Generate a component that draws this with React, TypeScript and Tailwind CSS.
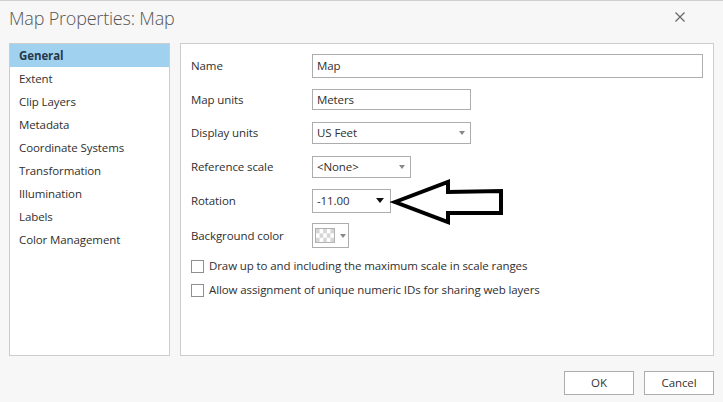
import React from "react";

const font = { fontFamily: '"Open Sans", "Noto Sans", sans-serif' };

function Caret({ dark }: { dark?: boolean }) {
  return dark ? (
    <svg width="8" height="5" viewBox="0 0 8 5" className="shrink-0">
      <path d="M0 0 L8 0 L4 5 Z" fill="#111" />
    </svg>
  ) : (
    <svg width="6" height="4" viewBox="0 0 6 4" className="shrink-0">
      <path d="M0 0 L6 0 L3 4 Z" fill="#888" />
    </svg>
  );
}

function Row({ h, label, children }: { h: string; label: string; children: React.ReactNode }) {
  return (
    <div className={`flex items-center ${h}`}>
      <div className="w-[121px] shrink-0">{label}</div>
      {children}
    </div>
  );
}

export default function App() {
  const items = [
    "General",
    "Extent",
    "Clip Layers",
    "Metadata",
    "Coordinate Systems",
    "Transformation",
    "Illumination",
    "Labels",
    "Color Management",
  ];
  return (
    <div
      className="relative w-[723px] h-[402px] bg-[#f7f7f7] border-t border-[#cfcfcf] text-[11.5px] tracking-[-0.1px] text-[#2f2f2f] flex flex-col overflow-hidden"
      style={font}
    >
      <div className="h-[42px] flex items-start justify-between pl-[9px] pr-[38px]">
        <div className="text-[18px] font-light text-[#555] leading-none mt-[8px] tracking-[-0.2px]">
          Map Properties: Map
        </div>
        <svg width="10" height="10" viewBox="0 0 10 10" className="mt-[11px]">
          <path d="M0.5 0.5 L9.5 9.5 M9.5 0.5 L0.5 9.5" stroke="#666" strokeWidth="1.2" />
        </svg>
      </div>
      <div className="flex gap-[10px] px-[9px] h-[313px]">
        <div className="w-[161px] bg-white border border-[#cdcdcd] flex flex-col">
          {items.map((it, i) => (
            <div
              key={it}
              className={`h-[23px] flex items-center pl-[9px] ${
                i === 0 ? "bg-[#a0d2f0] font-bold text-[#263848]" : ""
              }`}
            >
              {it}
            </div>
          ))}
        </div>
        <div className="flex-1 bg-white border border-[#cdcdcd] pl-[10px] pr-[10px] pt-[5px] flex flex-col">
          <Row h="h-[34px]" label="Name">
            <div className="flex-1 h-[24px] border border-[#adadad] flex items-center pl-[4px]">Map</div>
          </Row>
          <Row h="h-[33px]" label="Map units">
            <div className="w-[159px] h-[21px] border border-[#adadad] flex items-center pl-[4px]">Meters</div>
          </Row>
          <Row h="h-[34px]" label="Display units">
            <div className="w-[159px] h-[22px] border border-[#adadad] flex items-center justify-between pl-[4px] pr-[5px]">
              <span>US Feet</span>
              <Caret />
            </div>
          </Row>
          <Row h="h-[33px]" label="Reference scale">
            <div className="w-[99px] h-[22px] border border-[#adadad] flex items-center justify-between pl-[4px] pr-[5px]">
              <span>&lt;None&gt;</span>
              <Caret />
            </div>
          </Row>
          <Row h="h-[35px]" label="Rotation">
            <div className="w-[79px] h-[24px] border border-[#adadad] flex items-center justify-between pl-[4px] pr-[6px]">
              <span>-11.00</span>
              <Caret dark />
            </div>
          </Row>
          <Row h="h-[35px]" label="Background color">
            <div className="w-[37px] h-[25px] border border-[#adadad] flex items-center pl-[2px] gap-[5px]">
              <svg width="20" height="15" viewBox="0 0 20 15">
                <rect x="0.5" y="0.5" width="19" height="14" fill="#fff" stroke="#b0b0b0" />
                {[0, 1, 2, 3, 4].map((c) =>
                  [0, 1, 2].map((r) =>
                    (c + r) % 2 === 0 ? (
                      <rect key={`${c}-${r}`} x={1 + c * 3.6} y={1 + r * 4.4} width="3.6" height="4.4" fill="#d6d6d6" />
                    ) : null
                  )
                )}
              </svg>
              <Caret />
            </div>
          </Row>
          <div className="h-[24px] mt-[1px] flex items-center gap-[5px]">
            <div className="w-[13px] h-[13px] border border-[#8f8f8f] bg-white" />
            <span>Draw up to and including the maximum scale in scale ranges</span>
          </div>
          <div className="h-[24px] flex items-center gap-[5px]">
            <div className="w-[13px] h-[13px] border border-[#8f8f8f] bg-white" />
            <span>Allow assignment of unique numeric IDs for sharing web layers</span>
          </div>
        </div>
      </div>
      <div className="flex justify-end gap-[10px] pr-[9px] mt-[15px]">
        <button className="w-[70px] h-[24px] border border-[#adadad] bg-white text-[#333]">OK</button>
        <button className="w-[70px] h-[24px] border border-[#adadad] bg-white text-[#333]">Cancel</button>
      </div>
      <svg
        className="absolute left-[388px] top-[175px]"
        width="120"
        height="52"
        viewBox="388 175 120 52"
      >
        <path
          d="M395 201 L448 181 L448 191 L501 190 L501 212 L448 212 L448 221 Z"
          fill="none"
          stroke="#000"
          strokeWidth="4"
          strokeLinejoin="miter"
        />
      </svg>
    </div>
  );
}
